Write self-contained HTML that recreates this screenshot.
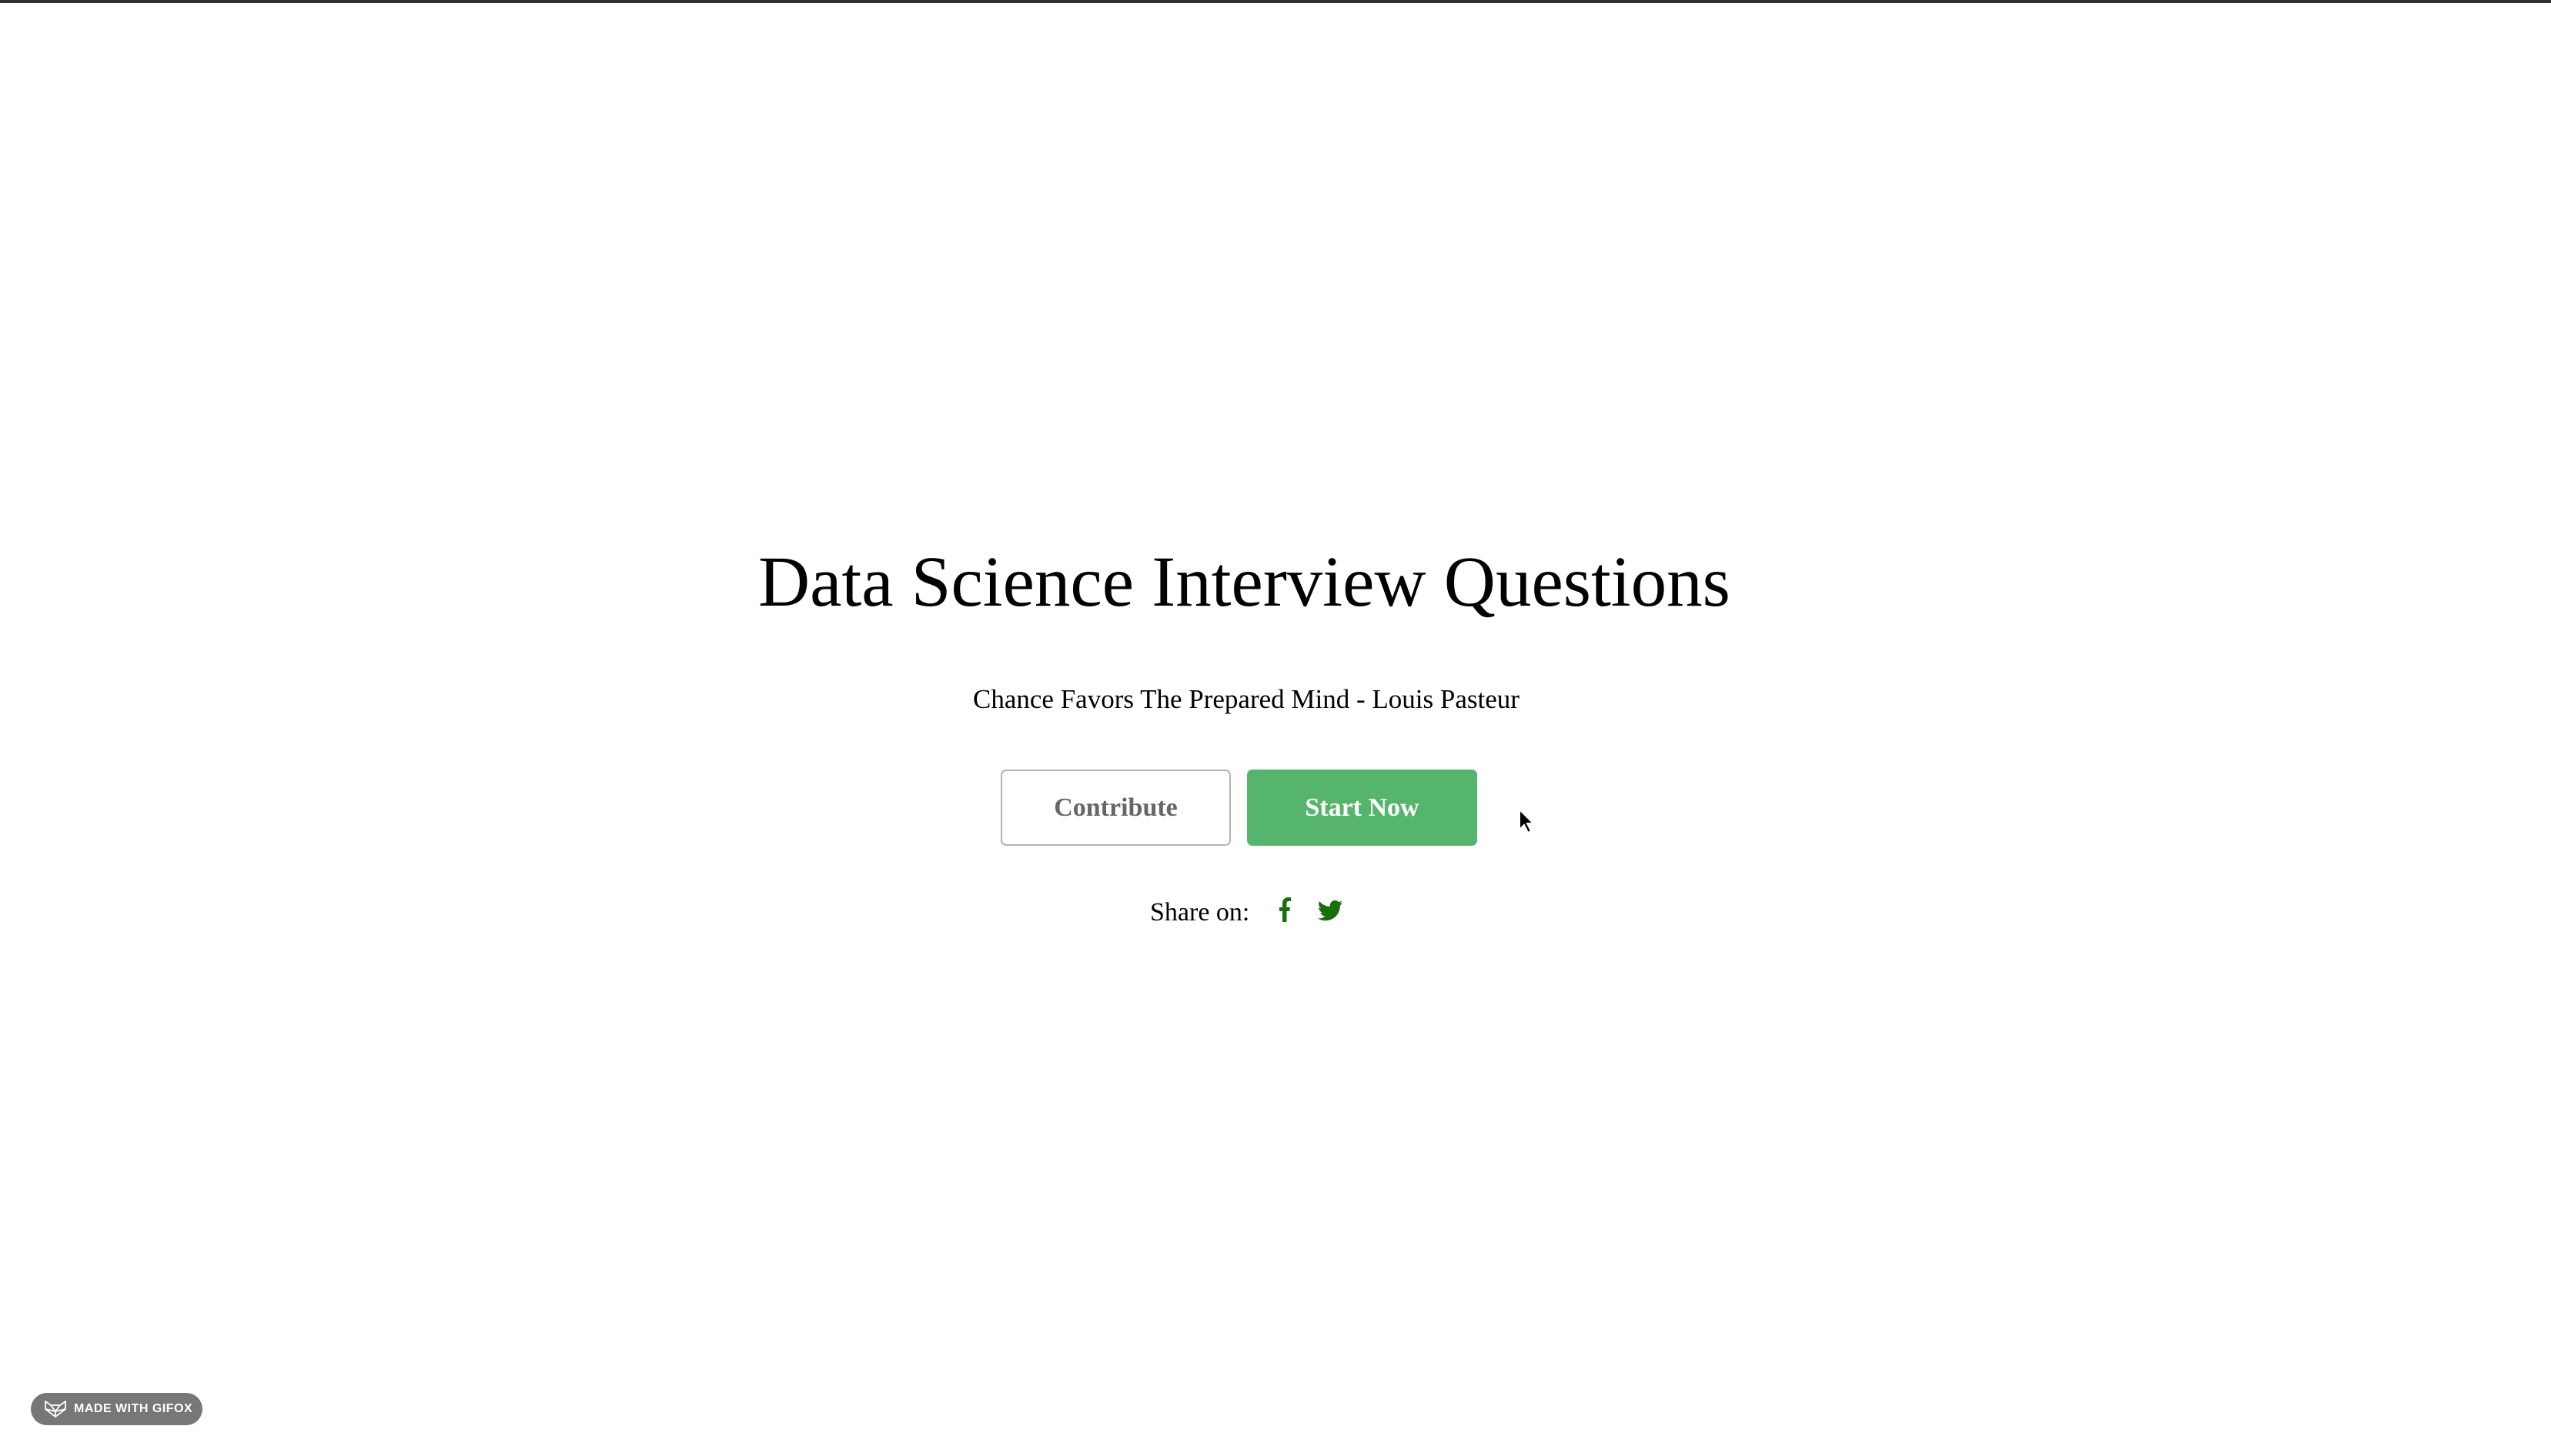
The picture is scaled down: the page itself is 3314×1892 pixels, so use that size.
<!DOCTYPE html>
<html><head><meta charset="utf-8"><style>
html,body{margin:0;padding:0;width:3314px;height:1892px;background:#fff;overflow:hidden;position:relative;font-family:"Liberation Serif",serif}
.a{position:absolute;white-space:nowrap}
#top{left:0;top:0;width:3314px;height:4px;background:#333}
#t{left:985px;top:697px;font-size:93px;line-height:120px;color:#000}
#s{left:1264px;top:885px;font-size:35px;line-height:48px;color:#000}
.b{top:1000px;height:99px;width:299px;box-sizing:border-box;border-radius:7px;font-size:34px;font-weight:bold;line-height:95px;text-align:center}
#c{left:1300px;border:2px solid #b3b3b3;color:#666;background:#fff}
#n{left:1620px;background:#55b56c;color:#fff;border:2px solid #55b56c}
#sh{left:1494px;top:1162px;font-size:34px;line-height:48px;color:#000}
#badge{left:40px;top:1810px;width:223px;height:42px;border-radius:21px;background:#777;color:#fff;font-family:"Liberation Sans",sans-serif;font-weight:bold;font-size:16px;letter-spacing:0.5px;line-height:42px}
</style></head><body>
<div class="a" id="top"></div>
<div class="a" id="t">Data Science Interview Questions</div>
<div class="a" id="s">Chance Favors The Prepared Mind - Louis Pasteur</div>
<div class="a b" id="c">Contribute</div>
<div class="a b" id="n">Start Now</div>
<div class="a" id="sh">Share on:</div>
<svg class="a" style="left:1661px;top:1166px" width="16" height="32" viewBox="0 0 16 32"><path d="M5 32V18H1v-5h4V8c0-5 3-8 8-8l3 .3V5h-2.5C11 5 10.5 6.2 10.5 8v5H15l-.7 5h-3.8v14z" fill="#17700a"/></svg>
<svg class="a" style="left:1711px;top:1170px" width="34" height="27" viewBox="0 0 24 20"><path d="M24 2.3c-.9.4-1.8.7-2.8.8 1-.6 1.800-1.6 2.2-2.7-1 .6-2 1-3.1 1.2A4.9 4.9 0 0 0 11.9 6 14 14 0 0 1 1.7.9a4.9 4.9 0 0 0 1.5 6.6c-.8 0-1.6-.3-2.2-.6 0 2.4 1.7 4.4 3.9 4.8-.7.2-1.5.2-2.2.1.6 2 2.4 3.4 4.6 3.4A9.9 9.9 0 0 1 0 17.3 14 14 0 0 0 7.5 19.5c9.1 0 14-7.5 14-14v-.6c1-.7 1.8-1.6 2.5-2.6z" fill="#17700a"/></svg>
<svg class="a" style="left:1972px;top:1050px" width="24" height="34" viewBox="0 0 24 34"><path d="M2 2v26l6-6 5 10 4-2-5-10h8z" fill="#000" stroke="#fff" stroke-width="2"/></svg>
<div class="a" id="badge"><svg style="position:absolute;left:17px;top:10px" width="30" height="22" viewBox="0 0 30 22"><path d="M2 1l7 5h12l7-5v10l-13 10L2 11z M9 6l6 8 6-8 M2 11l13 3 13-3 M15 14v7" fill="none" stroke="#fff" stroke-width="1.8"/></svg><span style="position:absolute;left:56px">MADE WITH GIFOX</span></div>
</body></html>
